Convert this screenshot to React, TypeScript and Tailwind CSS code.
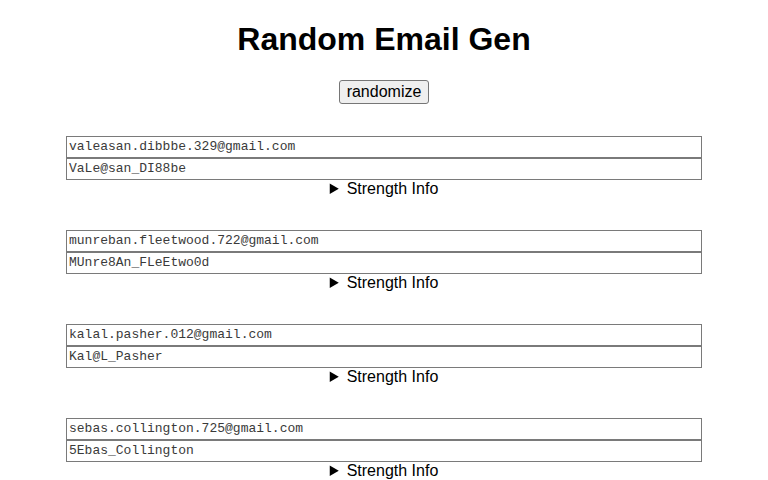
import { useState } from "react";

const accounts = [
  { email: "valeasan.dibbbe.329@gmail.com", password: "VaLe@san_DI88be" },
  { email: "munreban.fleetwood.722@gmail.com", password: "MUnre8An_FLeEtwo0d" },
  { email: "kalal.pasher.012@gmail.com", password: "Kal@L_Pasher" },
  { email: "sebas.collington.725@gmail.com", password: "5Ebas_Collington" },
];

const inputClass =
  "block w-full h-[22px] px-[2px] pb-[1px] border border-[#7a7a7a] bg-white text-[13px] text-[#3a3a3a] outline-none";

export default function App() {
  const [list] = useState(accounts);

  return (
    <div
      className="min-h-screen bg-white text-black"
      style={{ fontFamily: '"Liberation Sans", Arial, sans-serif' }}
    >
      <h1 className="text-[32px] font-bold text-center leading-[37px] pt-[21px] mb-[22px]">
        Random Email Gen
      </h1>
      <div className="flex justify-center">
        <button className="h-[24px] w-[90px] bg-[#efefef] border border-[#767676] rounded-[3px] text-[16px] leading-[18px]">
          randomize
        </button>
      </div>
      <div className="flex flex-col gap-8 mt-8 w-[636px] mx-auto">
        {list.map((acc, i) => (
          <div key={i}>
            <input
              className={inputClass}
              style={{ fontFamily: '"Courier New", "Liberation Mono", monospace' }}
              defaultValue={acc.email}
            />
            <input
              className={inputClass}
              style={{ fontFamily: '"Courier New", "Liberation Mono", monospace' }}
              defaultValue={acc.password}
            />
            <details className="text-center text-[16px] leading-[18px]">
              <summary className="cursor-pointer">Strength Info</summary>
            </details>
          </div>
        ))}
      </div>
    </div>
  );
}
